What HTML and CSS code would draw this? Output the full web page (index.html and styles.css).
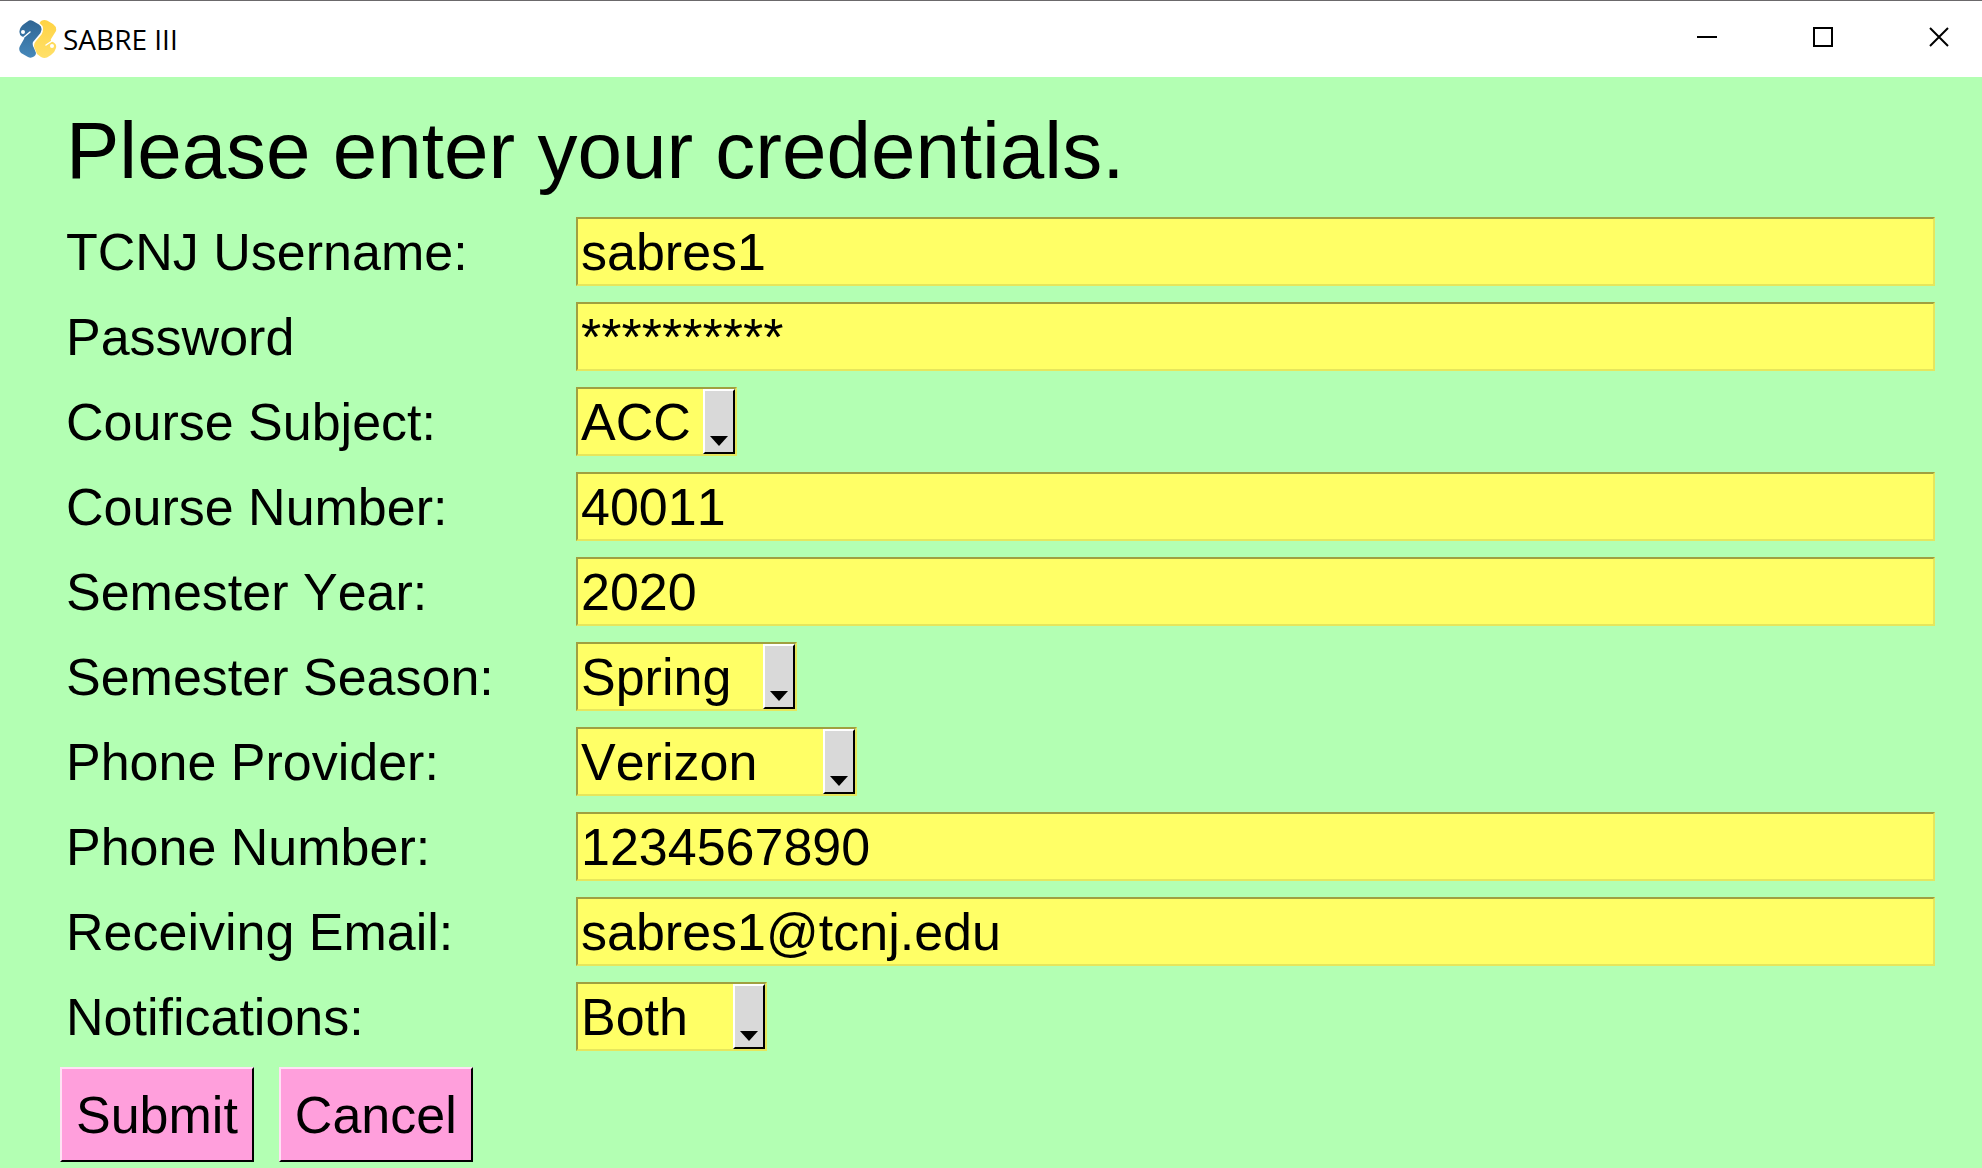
FILE: index.html
```html
<!DOCTYPE html>
<html lang="en">
<head>
<meta charset="utf-8">
<title>SABRE III</title>
<link rel="stylesheet" href="styles.css">
</head>
<body>
<header class="titlebar">
  <svg class="logo" viewBox="0 0 38 38" aria-hidden="true">
    <defs>
      <linearGradient id="blue" x1="0" y1="0" x2="0" y2="1"><stop offset="0" stop-color="#2f6594"/><stop offset="1" stop-color="#4688ba"/></linearGradient>
      <linearGradient id="gold" x1="0" y1="0" x2="0" y2="1"><stop offset="0" stop-color="#ffd343"/><stop offset="1" stop-color="#ffe069"/></linearGradient>
    </defs>
    <path fill="url(#blue)" d="M10 0.500Q12 0 14 1L20 4.500Q23 6.500 22.500 10L21.500 13L14 22Q13 25 15 28L17 33Q17 35 15 36.500Q12 38.500 9 37L2 33Q-1 30 1 26L5 19Q6 17 3 16.500Q0 15 0.500 11Q1 7 5 4Z"/>
    <path fill="url(#gold)" d="M22 1Q25 -0.500 28 0.500L34 4Q38 7 37 11L32 19Q31 21 34 22Q38 24 37 28Q36 32 32 35L28 37.500Q25 38.500 22 37L18 34L15.500 28Q14 24 17 21L22.500 14.500Q25 10 23.500 6L20.500 3Z"/>
    <path fill="none" stroke="#fff" stroke-width="1.500" stroke-linecap="round" d="M11 12L5 17M33 21L27 25"/>
    <circle cx="4" cy="12" r="2" fill="#fff"/>
    <circle cx="33" cy="26" r="2" fill="#fff"/>
  </svg>
  <span class="caption">SABRE III</span>
  <div class="controls">
    <button class="control" type="button" aria-label="Minimize"><svg viewBox="0 0 20 20"><path d="M0 10H20"/></svg></button>
    <button class="control" type="button" aria-label="Maximize"><svg viewBox="0 0 20 20"><path d="M1 1H19V19H1Z"/></svg></button>
    <button class="control" type="button" aria-label="Close"><svg viewBox="0 0 20 20"><path d="M1 1L19 19M19 1L1 19"/></svg></button>
  </div>
</header>
<main class="window">
  <h1 class="heading">Please enter your credentials.</h1>
  <form>
    <div class="fields">
      <label for="user">TCNJ Username:</label>
      <input class="entry" id="user" type="text" value="sabres1">
      <label for="pass">Password</label>
      <input class="entry" id="pass" type="text" autocomplete="off" value="**********">
      <label for="subject">Course Subject:</label>
      <div class="combo subject"><select id="subject"><option>ACC</option></select><span class="arrow"></span></div>
      <label for="course">Course Number:</label>
      <input class="entry" id="course" type="text" value="40011">
      <label for="year">Semester Year:</label>
      <input class="entry" id="year" type="text" value="2020">
      <label for="season">Semester Season:</label>
      <div class="combo season"><select id="season"><option>Spring</option></select><span class="arrow"></span></div>
      <label for="provider">Phone Provider:</label>
      <div class="combo provider"><select id="provider"><option>Verizon</option></select><span class="arrow"></span></div>
      <label for="phone">Phone Number:</label>
      <input class="entry" id="phone" type="text" value="1234567890">
      <label for="email">Receiving Email:</label>
      <input class="entry" id="email" type="text" value="sabres1@tcnj.edu">
      <label for="notify">Notifications:</label>
      <div class="combo notify"><select id="notify"><option>Both</option></select><span class="arrow"></span></div>
    </div>
    <div class="actions">
      <button class="action" type="submit">Submit</button>
      <button class="action" type="button">Cancel</button>
    </div>
  </form>
</main>
</body>
</html>
```
FILE: styles.css
```css
* {
  box-sizing: border-box;
}

body {
  margin: 0;
  min-height: 100vh;
  background: #b3ffb3;
  color: #000;
  font-family: "Liberation Sans", Arial, sans-serif;
  font-size: 52px;
  font-kerning: none;
  line-height: 60px;
}

.titlebar {
  display: flex;
  align-items: center;
  height: 77px;
  padding-left: 19px;
  background: #fff;
  border-top: 1px solid #6b696b;
}

.logo {
  width: 38px;
  height: 38px;
}

.caption {
  margin-left: 6px;
  font-family: "Open Sans", "Noto Sans", sans-serif;
  font-size: 28px;
  line-height: 40px;
}

.controls {
  display: flex;
  align-self: stretch;
  margin-left: auto;
}

.control {
  display: flex;
  align-items: center;
  justify-content: center;
  width: 116px;
  padding: 0 0 4px;
  border: 0;
  background: none;
}

.control:last-child {
  width: 101px;
  padding-left: 15px;
}

.control svg {
  width: 20px;
  height: 20px;
  fill: none;
  stroke: #000;
  stroke-width: 2;
}

.window {
  padding: 26px 47px 6px 60px;
}

.heading {
  margin: 0 0 18px;
  padding-left: 6px;
  font-size: 80px;
  font-weight: 400;
  line-height: 96px;
}

.fields {
  display: grid;
  grid-template-columns: 500px 1fr;
  grid-auto-rows: 69px;
  column-gap: 10px;
  row-gap: 16px;
  padding-left: 6px;
}

.fields label {
  align-self: center;
}

.entry,
.combo {
  border: 2px solid;
  border-color: #a0a040 #e6e65c #e6e65c #a0a040;
  background: #ffff66;
}

.entry {
  width: 100%;
  min-width: 0;
  padding: 0 3px;
  border-radius: 0;
  color: inherit;
  font: inherit;
  font-kerning: none;
  outline: none;
}

.combo {
  display: flex;
}

.combo select {
  flex: 1;
  min-width: 0;
  padding: 0 3px;
  appearance: none;
  border: 0;
  border-radius: 0;
  background: none;
  color: inherit;
  font: inherit;
  font-kerning: none;
}

.subject {
  width: 161px;
}

.notify {
  width: 191px;
}

.season {
  width: 221px;
}

.provider {
  width: 281px;
}

.arrow {
  display: flex;
  align-items: flex-end;
  justify-content: center;
  width: 32px;
  padding-bottom: 6px;
  border: 2px solid;
  border-color: #fff #000 #000 #fff;
  background: #d9d9d9;
  pointer-events: none;
}

.arrow::before {
  content: "";
  border: 9px solid transparent;
  border-top: 10px solid #000;
  border-bottom: 0;
}

.actions {
  display: flex;
  gap: 25px;
  margin-top: 16px;
}

.action {
  height: 95px;
  padding: 0 14px;
  border: 2px solid;
  border-color: #ffe0f4 #000 #000 #ffe0f4;
  border-radius: 0;
  background: #ff9fdc;
  color: inherit;
  font: inherit;
}
```
